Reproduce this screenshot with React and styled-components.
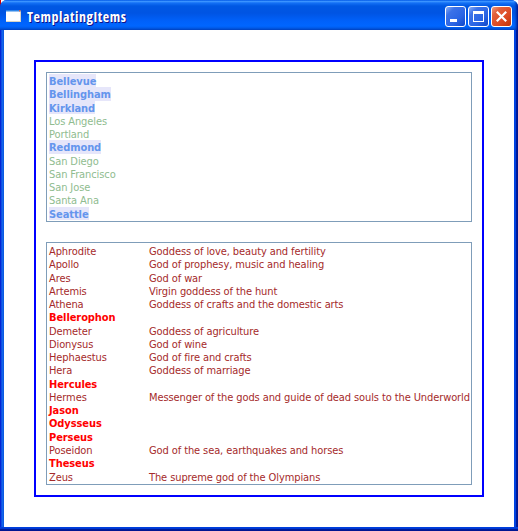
import React from 'react';
import styled, { createGlobalStyle, css } from 'styled-components';

const Global = createGlobalStyle`
  * { box-sizing: border-box; }
  body { margin: 0; background: #fff; overflow: hidden; }
`;

const Desktop = styled.div`
  background: linear-gradient(90deg, #d00000 0, #d00000 1px, #fff 1px);
`;

const Window = styled.div`
  width: 518px;
  height: 531px;
  display: flex;
  flex-direction: column;
  border-radius: 7px 7px 0 0;
  overflow: hidden;
  background:
    linear-gradient(transparent 527px, #0042e0 527px, #0036d0 529px, #001ea0 529px, #00138c 531px),
    linear-gradient(90deg, #0019cf 0, #0831d9 1px, #166aee 2px, #0855dd 4px, #0042e0 514px, #0042e0 516px, #001ea0 516px, #00138c 518px);
`;

const TitleBar = styled.header`
  height: 30px;
  flex: none;
  display: flex;
  align-items: center;
  padding: 3px 6px 0 6px;
  background:
    linear-gradient(90deg, transparent 514px, #0030a880 516px, #00138c 518px),
    linear-gradient(#0058e6 0, #3a93ff 1.5px, #1370f5 3px, #0058e3 6px, #0054e3 13px, #0061fa 21px, #0066ff 26px, #005ae8 28px, #0040bd 30px);
`;

const Title = styled.h1`
  margin: 0 auto 0 6px;
  color: #fff;
  font: bold 14px/18px "Open Sans", "Noto Sans", sans-serif;
  font-stretch: 75%;
  letter-spacing: 0.55px;
  white-space: nowrap;
  text-shadow: 1px 1px #0f1089;
`;

const Buttons = styled.div`
  display: flex;
  gap: 2px;
`;

const CaptionButton = styled.button`
  width: 21px;
  height: 21px;
  padding: 0;
  display: block;
  border: 1px solid #fff;
  border-radius: 3px;
  background: ${(p) => p.$close
    ? 'linear-gradient(135deg, #ee9a80 0, #e2603c 25%, #dc4820 65%, #c03408 100%)'
    : 'linear-gradient(135deg, #8aaef5 0, #3c72e8 25%, #2a64e4 65%, #0e46c8 100%)'};
  svg { display: block; }
`;

const Client = styled.main`
  flex: 1;
  margin: 0 4px 4px;
  padding: 30px;
  background: #fff;
`;

const Frame = styled.section`
  width: 450px;
  height: 437px;
  border: 2px solid #00f;
  padding: 10px;
  display: flex;
  flex-direction: column;
  gap: 20px;
`;

const List = styled.ul`
  margin: 0;
  padding: 1px 2px;
  list-style: none;
  height: ${(p) => p.$height}px;
  border: 1px solid #7f9db9;
  font: 11px/15px "DejaVu Sans Condensed", "DejaVu Sans", sans-serif;
  white-space: nowrap;
`;

const Row = styled.li`
  height: 13.27px;
  display: grid;
  grid-template-columns: 100px 1fr;
  grid-template-rows: 13.27px;
  color: #a52a2a;
`;

const Text = styled.span`
  justify-self: start;
  letter-spacing: -0.1px;
  color: ${(p) => p.$color};
  ${(p) => p.$bold && css`font-weight: bold; letter-spacing: -0.08px;`}
  ${(p) => p.$marked && css`background: #e6e6fa;`}
`;

const IconSvg = styled.svg`
  flex: none;
  margin-bottom: 2px;
`;

const cities = ['*Bellevue', '*Bellingham', '*Kirkland', 'Los Angeles', 'Portland', '*Redmond', 'San Diego', 'San Francisco', 'San Jose', 'Santa Ana', '*Seattle'];

const figures = [
  ['Aphrodite', 'Goddess of love, beauty and fertility'],
  ['Apollo', 'God of prophesy, music and healing'],
  ['Ares', 'God of war'],
  ['Artemis', 'Virgin goddess of the hunt'],
  ['Athena', 'Goddess of crafts and the domestic arts'],
  ['Bellerophon'],
  ['Demeter', 'Goddess of agriculture'],
  ['Dionysus', 'God of wine'],
  ['Hephaestus', 'God of fire and crafts'],
  ['Hera', 'Goddess of marriage'],
  ['Hercules'],
  ['Hermes', 'Messenger of the gods and guide of dead souls to the Underworld'],
  ['Jason'],
  ['Odysseus'],
  ['Perseus'],
  ['Poseidon', 'God of the sea, earthquakes and horses'],
  ['Theseus'],
  ['Zeus', 'The supreme god of the Olympians'],
];

function AppIcon() {
  return (
    <IconSvg width="15" height="12">
      <path d="M0 0h15v12H0z" fill="#fff" />
      <path d="M0 0h15v1.5H0z" fill="#2f86e8" />
      <path d="M13 0h1.5v1.5H13z" fill="#e0603c" />
      <path d="M0 11h15v1H0zM14 2h1v10h-1z" fill="#d8d4c4" />
    </IconSvg>
  );
}

export default function App() {
  return (
    <Desktop>
      <Global />
      <Window>
        <TitleBar>
          <AppIcon />
          <Title>TemplatingItems</Title>
          <Buttons>
            <CaptionButton aria-label="Minimize"><svg width="19" height="19"><path d="M4 12h7v3H4z" fill="#fff" /></svg></CaptionButton>
            <CaptionButton aria-label="Maximize"><svg width="19" height="19"><path d="M4 4h11v11H4zM5 7v7h9V7z" fill="#fff" fillRule="evenodd" /></svg></CaptionButton>
            <CaptionButton $close aria-label="Close"><svg width="19" height="19"><path d="M4.8 4.8l9.4 9.4M14.2 4.8l-9.4 9.4" stroke="#fff" strokeWidth="2.2" /></svg></CaptionButton>
          </Buttons>
        </TitleBar>
        <Client>
          <Frame>
            <List $height={150}>
              {cities.map((name) => {
                const local = name.startsWith('*');
                return (
                  <Row key={name}>
                    <Text $bold={local} $marked={local} $color={local ? '#6495ed' : '#8fbc8f'}>{name.replace('*', '')}</Text>
                  </Row>
                );
              })}
            </List>
            <List $height={243}>
              {figures.map(([name, role]) => (
                <Row key={name}>
                  <Text $bold={!role} $color={role ? '#a52a2a' : '#f00'}>{name}</Text>
                  {role && <Text>{role}</Text>}
                </Row>
              ))}
            </List>
          </Frame>
        </Client>
      </Window>
    </Desktop>
  );
}
